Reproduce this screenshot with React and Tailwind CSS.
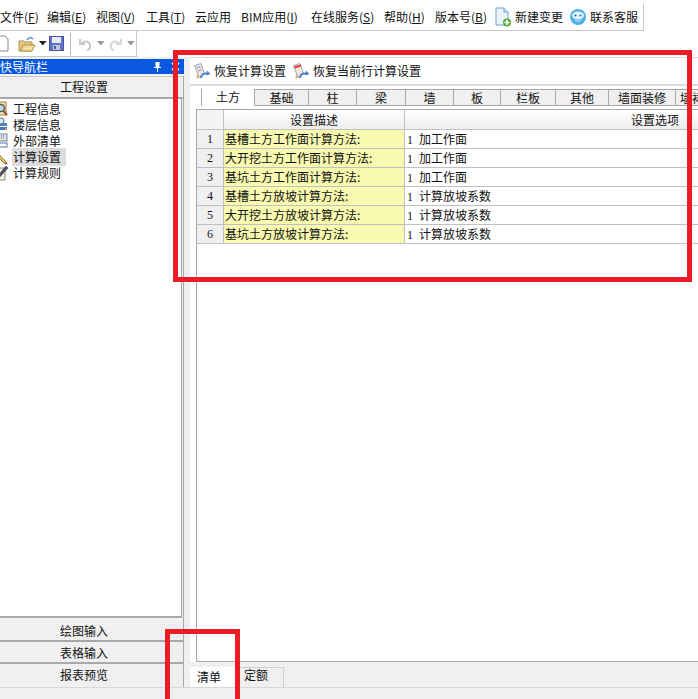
import { Fragment } from 'react';

const FONT = 'font-["Noto_Sans_CJK_SC",sans-serif]';

const MENUS = [
  { label: '文件(', key: 'F', w: 'w-[47px]' },
  { label: '编辑(', key: 'E', w: 'w-[49px]' },
  { label: '视图(', key: 'V', w: 'w-[50px]' },
  { label: '工具(', key: 'T', w: 'w-[49px]' },
  { label: '云应用', w: 'w-[46px]' },
  { label: 'BIM应用(', key: 'I', w: 'w-[70px]' },
  { label: '在线服务(', key: 'S', w: 'w-[73px]' },
  { label: '帮助(', key: 'H', w: 'w-[51px]' },
  { label: '版本号(', key: 'B', w: 'w-[60px]' },
];

const TABS = [
  { label: '土方', w: 'w-[54px] text-center', active: true },
  { label: '基础', w: 'w-[54px] text-center' },
  { label: '柱', w: 'w-[48px] text-center' },
  { label: '梁', w: 'w-[49px] text-center' },
  { label: '墙', w: 'w-[48px] text-center' },
  { label: '板', w: 'w-[47px] text-center' },
  { label: '栏板', w: 'w-[55px] text-center' },
  { label: '其他', w: 'w-[53px] text-center' },
  { label: '墙面装修', w: 'w-[67px] text-center' },
  { label: '墙裙', w: 'w-[60px] text-left pl-[4px]' },
];

const ROWS = [
  ['基槽土方工作面计算方法:', '加工作面'],
  ['大开挖土方工作面计算方法:', '加工作面'],
  ['基坑土方工作面计算方法:', '加工作面'],
  ['基槽土方放坡计算方法:', '计算放坡系数'],
  ['大开挖土方放坡计算方法:', '计算放坡系数'],
  ['基坑土方放坡计算方法:', '计算放坡系数'],
];

function RestoreIcon({ red }) {
  return (
    <svg width="19" height="19" viewBox="0 0 19 19" className="shrink-0">
      <path d="M1.5 3.5L8 1.5l3.5 10-5.5 4z" fill="#ece8dc" stroke="#a8a4b4" />
      {red
        ? <path d="M2 4.5l6.6-2 .7 2-6.6 2z" fill="#e23a3a" />
        : <path d="M3.5 5l3.5-1 .6 1.6-3.5 1zM4.500 8l3.500-1 .6 1.600-3.500 1z" fill="#9fb0d4" />}
      <path d="M4 11l2 4.500-2.500 1.500z" fill="#d8b070" />
      <path d="M8 16c.5-4 3.500-5.500 7.500-4" fill="none" stroke="#4a82cc" strokeWidth="2" />
      <path d="M14 8.500l3.500 3.500-4.500 1.500z" fill="#4a82cc" />
    </svg>
  );
}

// the tree icons hang off the left edge of the window, only their right part shows
function TreeIcon({ index }) {
  return (
    <svg width="16" height="16" viewBox="0 0 16 16" className="shrink-0 -ml-[7px]">
      {index === 0 && (
        <>
          <rect x="1" y="1" width="12" height="13" fill="#f2e4c0" stroke="#a87c38" />
          <circle cx="8" cy="7" r="3.500" fill="#bcd8f0" stroke="#6a5a48" strokeWidth="1.500" />
          <path d="M10.500 10l3.500 4" stroke="#8a5a28" strokeWidth="2" />
        </>
      )}
      {index === 1 && (
        <>
          <rect x="1" y="6" width="13" height="3" fill="#4a86d0" />
          <rect x="1" y="10" width="13" height="3" fill="#3f78c4" />
          <circle cx="8" cy="4" r="3" fill="#d8e8f4" stroke="#5a6a80" />
          <path d="M12 10l2 2-2 2z" fill="#e8a040" />
        </>
      )}
      {index === 2 && (
        <>
          <rect x="2" y="1" width="12" height="7" fill="#dfe4ec" stroke="#7a8698" />
          <path d="M4 3h8M4 5h8" stroke="#5a6a88" strokeDasharray="1 1" />
          <rect x="1" y="10" width="13" height="4" fill="#fff" stroke="#5a7ab0" />
        </>
      )}
      {index === 3 && (
        <>
          <path d="M2 1l12 13-2 1L0 3z" fill="#e8c860" stroke="#8a7030" />
          <path d="M12 13l3 2-2 .5z" fill="#d04030" />
          <path d="M1 8v6h6" fill="none" stroke="#8a8a8a" />
        </>
      )}
      {index === 4 && (
        <>
          <rect x="1" y="3" width="11" height="12" fill="#f4f0e4" stroke="#8a8a80" />
          <path d="M3 13L13 1l2 2L5 14l-3 1z" fill="#4a5060" stroke="#303030" strokeWidth="0.500" />
          <path d="M3 12l2 2-3 1z" fill="#e8c870" />
        </>
      )}
    </svg>
  );
}

function Arrow({ color }) {
  return (
    <svg width="8" height="5" viewBox="0 0 8 5" className="shrink-0">
      <path d="M0 0h7.500L3.750 4.500z" fill={color} />
    </svg>
  );
}

function Menu() {
  return (
    <div className="bg-white pt-[4px] shrink-0">
      <div className="h-[27px] w-[644px] flex items-center border-r border-b border-[#c8c8c8] text-[12px] text-[#111] whitespace-nowrap">
        {MENUS.map(m => (
          <span key={m.label} className={`shrink-0 ${m.w}`}>
            {m.label}
            {m.key && <><span className="underline">{m.key}</span>)</>}
          </span>
        ))}
        <svg width="18" height="20" viewBox="0 0 18 20" className="shrink-0 -ml-[1px]">
          <path d="M2 1h8l4 4v13H2z" fill="#eef4fb" stroke="#6aa0d0" />
          <path d="M10 1v4h4" fill="#cfe0f0" stroke="#6aa0d0" />
          <circle cx="13" cy="15.500" r="4" fill="#5cab3c" />
          <path d="M10.500 15.500h5M13 13v5" stroke="#fff" strokeWidth="1.500" />
        </svg>
        <span className="ml-[3px] w-[55px] shrink-0">新建变更</span>
        <svg width="18" height="18" viewBox="0 0 18 18" className="shrink-0 -ml-[1px]">
          <circle cx="9" cy="9" r="8" fill="#4cb0ea" />
          <ellipse cx="9" cy="7.500" rx="6" ry="4" fill="#e2f4ff" />
          <circle cx="6.500" cy="7.500" r="1.100" fill="#1f6fb0" />
          <circle cx="11.500" cy="7.500" r="1.100" fill="#1f6fb0" />
          <path d="M6 12c2 1.500 4 1.500 6 0" fill="none" stroke="#e2f4ff" />
        </svg>
        <span className="ml-[3px]">联系客服</span>
      </div>
    </div>
  );
}

function ToolBar() {
  return (
    <div className="bg-white shrink-0">
      <div className="h-[26px] w-[137px] flex items-center border-r border-b border-[#c8c8c8]">
        <svg width="9" height="17" viewBox="0 0 9 17" className="shrink-0">
          <path d="M-3 1h8l3 3v12H-3z" fill="#fff" stroke="#8a8a8a" />
        </svg>
        <svg width="18" height="16" viewBox="0 0 18 16" className="ml-[9px] shrink-0">
          <path d="M1 5h5l1 1h7v9H1z" fill="#e8c878" stroke="#b0904a" />
          <path d="M3 15l2-6h12l-3 6z" fill="#f4dc9c" stroke="#b0904a" />
          <path d="M9 4c2-3 4-3 6-1" fill="none" stroke="#4a8ac8" strokeWidth="1.500" />
        </svg>
        <span className="ml-[3px]"><Arrow color="#222" /></span>
        <svg width="15" height="15" viewBox="0 0 15 15" className="ml-[2px] shrink-0">
          <rect x="0.500" y="0.500" width="14" height="14" fill="#6272c4" stroke="#46549a" />
          <rect x="3" y="1" width="9" height="6" fill="#e8ebf6" />
          <rect x="4" y="9" width="7" height="5" fill="#c4c8d8" />
          <rect x="5" y="10" width="2" height="3" fill="#46549a" />
        </svg>
        <div className="ml-[6px] mr-[8px] h-[22px] w-px bg-[#b8b8b8]" />
        <svg width="13" height="14" viewBox="0 0 13 14" className="shrink-0">
          <path d="M1 2v5h5M2 7c3-4 8-3 9 1s-2 5-3 5" fill="none" stroke="#c8c8c8" strokeWidth="2" />
        </svg>
        <span className="ml-[5px]"><Arrow color="#999" /></span>
        <svg width="13" height="14" viewBox="0 0 13 14" className="ml-[4px] shrink-0">
          <path d="M12 2v5H7M11 7c-3-4-8-3-9 1s2 5 3 5" fill="none" stroke="#d8d8d8" strokeWidth="2" />
        </svg>
        <span className="ml-[5px]"><Arrow color="#999" /></span>
      </div>
    </div>
  );
}

function NavButton({ children, className = '' }) {
  return (
    <div className={`flex items-center justify-center bg-[#f0f0f0] pr-[15px] text-[12px] text-[#111] ${className}`}>
      {children}
    </div>
  );
}

function Sidebar() {
  return (
    <div className="w-[184px] shrink-0 flex flex-col pt-[2px]">
      <div className="h-[15px] shrink-0 bg-[#0a58e0] text-white text-[12px] leading-[15px] flex items-center whitespace-nowrap overflow-hidden">
        <span>快导航栏</span>
        <svg width="9" height="11" viewBox="0 0 9 11" className="ml-[105px] shrink-0">
          <path d="M2.500 1h4v5h1.500v1H1V6h1.500zM4 7h1v4H4z" fill="#fff" />
        </svg>
        <svg width="9" height="9" viewBox="0 0 9 9" className="ml-[9px] shrink-0">
          <path d="M1 1l7 7M8 1L1 8" stroke="#fff" strokeWidth="1.500" />
        </svg>
      </div>
      <div className="mt-[2px] flex-1 min-h-0 flex flex-col border-r border-[#a8a8a8]">
        <NavButton className="h-[23px] shrink-0 border-t border-t-[#c8c8c8] border-b-2 border-b-[#a8a8a8]">工程设置</NavButton>
        <div className="flex-1 min-h-0 bg-white border-r border-b-2 border-[#a8a8a8] pt-[2px] mr-[1px]">
          {['工程信息', '楼层信息', '外部清单', '计算设置', '计算规则'].map((label, i) => (
            <div key={label} className="h-[16px] flex items-center gap-[4px] text-[12px] text-[#111]">
              <TreeIcon index={i} />
              <span className={i === 3 ? 'bg-[#dcdcdc] pr-[5px] pl-[1px] -ml-[1px]' : ''}>{label}</span>
            </div>
          ))}
        </div>
        <div className="h-[2px] shrink-0" />
        <NavButton className="h-[22px] shrink-0 pt-[2px] border-b-2 border-[#a8a8a8]">绘图输入</NavButton>
        <NavButton className="h-[22px] shrink-0 pt-[2px] border-b-2 border-[#a8a8a8]">表格输入</NavButton>
        <NavButton className="h-[23px] shrink-0 pb-[2px]">报表预览</NavButton>
      </div>
    </div>
  );
}

function Grid() {
  return (
    <div className="flex-1 min-h-0 ml-[6px] border-l border-t border-b border-[#a8a8a8] bg-white overflow-hidden">
      <div className="grid grid-cols-[27px_181px_1fr] text-[12px] text-[#111] w-[520px]">
        <div className="h-[20px] bg-[#f4f4f4] border-r border-b border-[#c0c0c0]" />
        <div className="h-[20px] bg-gradient-to-b from-white to-[#eeeeee] border-r border-b border-[#c0c0c0] text-center leading-[20px]">设置描述</div>
        <div className="h-[20px] bg-gradient-to-b from-white to-[#eeeeee] border-b border-[#c0c0c0] text-center leading-[20px] pl-[188px]">设置选项</div>
        {ROWS.map((r, i) => (
          <Fragment key={r[0]}>
            <div className="h-[19px] bg-[#f0f0f0] border-r border-b border-[#c0c0c0] text-center leading-[18px] font-['Liberation_Serif',serif]">{i + 1}</div>
            <div className="h-[19px] bg-[#f8fab0] border-r border-b border-[#c0c0c0] pl-[1px] leading-[18px] whitespace-nowrap">{r[0]}</div>
            <div className="h-[19px] bg-white border-b border-[#c0c0c0] pl-[2px] leading-[18px] whitespace-nowrap">
              <span className="font-['Liberation_Serif',serif] mr-[6px]">1</span>{r[1]}
            </div>
          </Fragment>
        ))}
      </div>
    </div>
  );
}

function Main() {
  return (
    <div className="flex-1 min-w-0 ml-[6px] flex flex-col overflow-hidden">
      <div className="h-[27px] shrink-0 bg-white border-t border-[#dcdcdc] flex items-center pl-[3px] text-[12px] text-[#111] whitespace-nowrap">
        <RestoreIcon />
        <span className="ml-[2px]">恢复计算设置</span>
        <span className="ml-[6px]"><RestoreIcon red /></span>
        <span className="ml-[2px]">恢复当前行计算设置</span>
      </div>
      <div className="flex-1 min-h-0 flex flex-col bg-white border-t-2 border-[#dcdcdc]">
        <div className="h-[20px] shrink-0 flex items-start pl-[11px] pt-[3px] overflow-hidden text-[12px] text-[#111] whitespace-nowrap">
          {TABS.map(t => (
            <div
              key={t.label}
              className={`h-[17px] shrink-0 leading-[15px] border-r border-[#a8a8a8] ${t.w} ${t.active ? 'bg-white border-l' : 'bg-[#f0f0f0] border-b border-t'}`}
            >
              {t.label}
            </div>
          ))}
        </div>
        <div className="h-[3px] shrink-0" />
        <Grid />
      </div>
      <div className="h-[25px] shrink-0 bg-[#f0f0f0] flex items-end text-[12px] text-[#111]">
        <div className="h-[20px] w-[50px] bg-white pl-[7px] leading-[20px]">清单</div>
        <div className="h-[20px] w-[44px] border-t border-r border-[#d0d0d0] pl-[4px] leading-[14px]">定额</div>
      </div>
    </div>
  );
}

export default function App() {
  return (
    <div className={`relative w-[698px] h-[699px] overflow-hidden bg-[#f0f0f0] flex flex-col ${FONT}`}>
      <Menu />
      <ToolBar />
      <div className="flex-1 min-h-0 flex">
        <Sidebar />
        <Main />
      </div>
      <div className="h-[12px] shrink-0 bg-[#f0f0f0] border-t border-[#d8d8d8]" />
      {/* red annotation boxes drawn over the app */}
      <div className="absolute left-[173px] top-[50px] w-[519px] h-[232px] border-[5px] border-[#ed1c24]" />
      <div className="absolute left-[165px] top-[629px] w-[75px] h-[80px] border-[5px] border-[#ed1c24]" />
    </div>
  );
}
